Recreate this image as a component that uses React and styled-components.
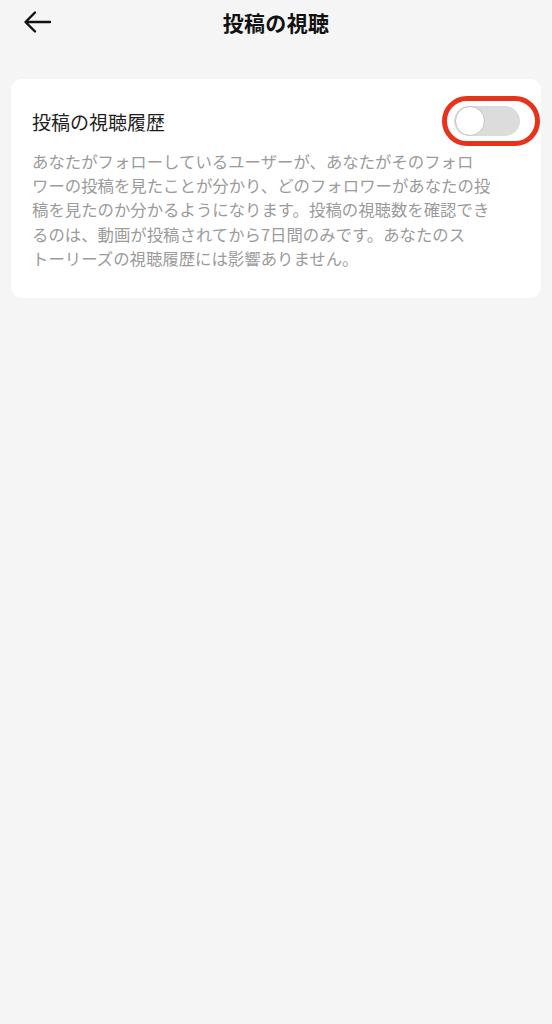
import React from "react";
import styled, { createGlobalStyle } from "styled-components";

const Global = createGlobalStyle`
  html, body { margin: 0; padding: 0; background: #f5f5f5; }
  body {
    font-family: "Noto Sans CJK JP", "Noto Sans", sans-serif;
    -webkit-font-smoothing: antialiased;
  }
`;

const Page = styled.div`
  min-height: 1024px;
  background: #f5f5f5;
  padding: 0 11px;
  box-sizing: border-box;
`;

const Header = styled.header`
  height: 44px;
  display: grid;
  grid-template-columns: 60px 1fr 60px;
  align-items: center;
  margin-bottom: 35px;
`;

const BackButton = styled.button`
  background: none;
  border: 0;
  padding: 0 0 0 12px;
  height: 44px;
  display: flex;
  align-items: center;
  color: #111;
  cursor: pointer;
`;

const Title = styled.h1`
  margin: 0;
  text-align: center;
  font-size: 21px;
  font-weight: 700;
  color: #111;
  letter-spacing: 0.3px;
  line-height: 44px;
`;

const Card = styled.section`
  background: #ffffff;
  border-radius: 11px;
  padding: 28px 21px 28px 21px;
`;

const Row = styled.div`
  display: flex;
  align-items: center;
  justify-content: space-between;
  height: 30px;
`;

const RowTitle = styled.span`
  font-size: 19px;
  color: #1e1e1e;
  line-height: 30px;
`;

const ToggleWrap = styled.div`
  position: relative;
  margin-top: -2px;
`;

const Track = styled.div`
  width: 66px;
  height: 30px;
  border-radius: 15px;
  background: ${(p) => (p.$on ? "#3b82f6" : "#dcdcdc")};
  display: flex;
  align-items: center;
  padding: 0 2px;
  box-sizing: border-box;
`;

const Knob = styled.div`
  width: 30px;
  height: 30px;
  border-radius: 50%;
  background: #fff;
  box-sizing: border-box;
  border: 1.5px solid #c4c4c4;
  margin-left: -1px;
`;

const Highlight = styled.div`
  position: absolute;
  left: -12px;
  top: -10px;
  width: 98px;
  height: 50px;
  border: 5px solid #e8321c;
  border-radius: 25px;
  box-sizing: border-box;
  pointer-events: none;
`;

const Description = styled.p`
  margin: 12px 0 0;
  font-size: 16.4px;
  line-height: 24.2px;
  color: #9b9b9b;
  white-space: nowrap;
`;

const lines = [
  "あなたがフォローしているユーザーが、あなたがそのフォロ",
  "ワーの投稿を見たことが分かり、どのフォロワーがあなたの投",
  "稿を見たのか分かるようになります。投稿の視聴数を確認でき",
  "るのは、動画が投稿されてから7日間のみです。あなたのス",
  "トーリーズの視聴履歴には影響ありません。",
];

export default function App() {
  return (
    <>
      <Global />
      <Page>
        <Header>
          <BackButton aria-label="戻る">
            <svg width="29" height="24" viewBox="0 0 29 24" fill="none">
              <path
                d="M27 12H3M12 2.5L2.5 12L12 21.5"
                stroke="#111"
                strokeWidth="2.4"
                strokeLinecap="round"
                strokeLinejoin="round"
              />
            </svg>
          </BackButton>
          <Title>投稿の視聴</Title>
          <div />
        </Header>
        <Card>
          <Row>
            <RowTitle>投稿の視聴履歴</RowTitle>
            <ToggleWrap>
              <Track $on={false}>
                <Knob />
              </Track>
              <Highlight />
            </ToggleWrap>
          </Row>
          <Description>
            {lines.map((l, i) => (
              <React.Fragment key={i}>
                {l}
                {i < lines.length - 1 && <br />}
              </React.Fragment>
            ))}
          </Description>
        </Card>
      </Page>
    </>
  );
}
